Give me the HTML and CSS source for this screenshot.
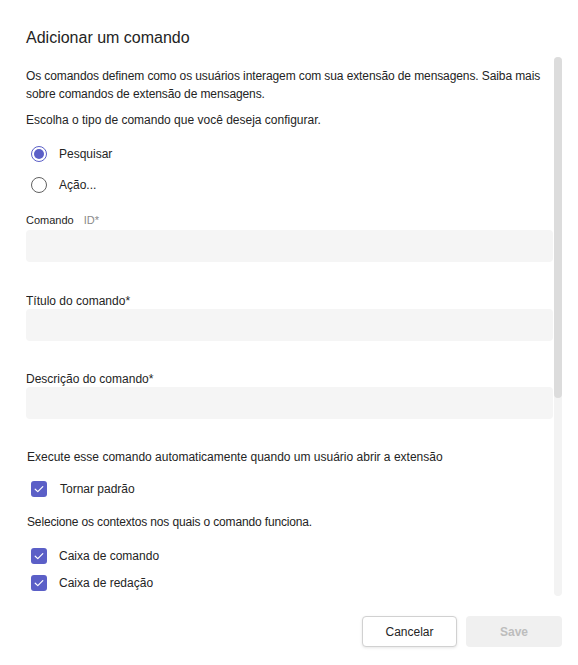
FILE: index.html
```html
<!DOCTYPE html>
<html lang="pt">
<head>
<meta charset="utf-8">
<title>Adicionar um comando</title>
<link rel="stylesheet" href="styles.css">
</head>
<body>
<div class="dialog">
  <h1 class="title">Adicionar um comando</h1>
  <div class="scroll">
    <div class="content">
      <p class="intro">Os comandos definem como os usuários interagem com sua extensão de mensagens. Saiba mais sobre comandos de extensão de mensagens.</p>
      <p class="prompt">Escolha o tipo de comando que você deseja configurar.</p>
      <div class="radios">
        <label class="radio-row">
          <span class="radio checked"><span class="dot"></span></span>
          <span class="radio-label">Pesquisar</span>
        </label>
        <label class="radio-row">
          <span class="radio"></span>
          <span class="radio-label">Ação...</span>
        </label>
      </div>
      <div class="field first">
        <div class="field-label small"><span>Comando</span><span class="muted">ID*</span></div>
        <div class="input"></div>
      </div>
      <div class="field">
        <div class="field-label">Título do comando*</div>
        <div class="input"></div>
      </div>
      <div class="field third">
        <div class="field-label">Descrição do comando*</div>
        <div class="input"></div>
      </div>
      <p class="section">Execute esse comando automaticamente quando um usuário abrir a extensão</p>
      <div class="check-row default">
        <span class="checkbox"><svg viewBox="0 0 16 16" width="16" height="16"><path d="M4.2 8.2 L6.8 10.6 L11.8 5.6" fill="none" stroke="#fff" stroke-width="1.2" stroke-linecap="round" stroke-linejoin="round"/></svg></span>
        <span class="check-label">Tornar padrão</span>
      </div>
      <p class="section second">Selecione os contextos nos quais o comando funciona.</p>
      <div class="check-row context">
        <span class="checkbox"><svg viewBox="0 0 16 16" width="16" height="16"><path d="M4.2 8.2 L6.8 10.6 L11.8 5.6" fill="none" stroke="#fff" stroke-width="1.2" stroke-linecap="round" stroke-linejoin="round"/></svg></span>
        <span class="check-label">Caixa de comando</span>
      </div>
      <div class="check-row context">
        <span class="checkbox"><svg viewBox="0 0 16 16" width="16" height="16"><path d="M4.2 8.2 L6.8 10.6 L11.8 5.6" fill="none" stroke="#fff" stroke-width="1.2" stroke-linecap="round" stroke-linejoin="round"/></svg></span>
        <span class="check-label">Caixa de redação</span>
      </div>
    </div>
    <div class="scrollbar"><div class="thumb"></div></div>
  </div>
  <div class="footer">
    <button class="btn cancel">Cancelar</button>
    <button class="btn save" disabled>Save</button>
  </div>
</div>
</body>
</html>
```
FILE: styles.css
```css
* { box-sizing: border-box; }
html, body { margin: 0; padding: 0; background: #fff; }
body {
  font-family: "Liberation Sans", Arial, sans-serif;
  color: #242424;
  width: 578px;
  height: 665px;
  overflow: hidden;
}
.dialog {
  padding: 26px 16px 0 26px;
  display: flex;
  flex-direction: column;
}
.title {
  margin: 0;
  font-size: 16px;
  font-weight: 400;
  line-height: 24px;
  height: 31px;
}
.scroll {
  display: flex;
  height: 539px;
}
.content {
  flex: 1;
  padding-top: 10px;
  padding-right: 1px;
  overflow: hidden;
}
.scrollbar {
  width: 8px;
  background: #f3f3f3;
  border-radius: 4px;
}
.thumb {
  height: 341px;
  background: #dcdcdc;
  border-radius: 4px;
}
p { margin: 0; }
.intro {
  font-size: 12px;
  line-height: 18px;
  letter-spacing: -0.1px;
}
.prompt {
  font-size: 12px;
  line-height: 18px;
  margin-top: 8px;
}
.radios {
  margin-top: 9px;
  display: flex;
  flex-direction: column;
}
.radio-row {
  display: flex;
  align-items: center;
  height: 31px;
  padding-left: 5px;
  gap: 12px;
}
.radio {
  width: 16px;
  height: 16px;
  border-radius: 50%;
  border: 1px solid #616161;
  display: flex;
  align-items: center;
  justify-content: center;
}
.radio.checked { border-color: #5b5fc7; }
.dot {
  width: 10px;
  height: 10px;
  border-radius: 50%;
  background: #5b5fc7;
}
.radio-label { font-size: 12px; }
.field { margin-top: 31px; }
.field.first { margin-top: 12px; }
.field.third { margin-top: 30px; }
.field-label {
  font-size: 12px;
  line-height: 16px;
}
.field-label.small {
  font-size: 11px;
  line-height: 17px;
  display: flex;
  gap: 10px;
  margin-bottom: 1px;
}
.muted { color: #8a8a8a; }
.input {
  height: 32px;
  background: #f5f5f5;
  border-radius: 4px;
}
.section {
  font-size: 12px;
  line-height: 16px;
  margin-top: 30px;
  padding-left: 1px;
}
.section.second {
  margin-top: 12px;
  letter-spacing: -0.15px;
}
.check-row {
  display: flex;
  align-items: center;
  gap: 12px;
  height: 26px;
  padding-left: 5px;
  font-size: 12px;
}
.check-row.default { margin-top: 11px; gap: 13px; }
.check-row.context { height: 27px; }
.section.second + .check-row { margin-top: 12px; }
.checkbox {
  width: 16px;
  height: 16px;
  border-radius: 3px;
  background: #5b5fc7;
  display: flex;
}
.footer {
  display: flex;
  justify-content: flex-end;
  gap: 9px;
  margin-top: 20px;
}
.btn {
  height: 31px;
  width: 96px;
  border-radius: 4px;
  font-family: inherit;
  font-size: 12px;
  font-weight: 600;
}
.cancel {
  width: 95px;
  background: #fff;
  border: 1px solid #d1d1d1;
  color: #242424;
  font-weight: 400;
  box-shadow: 0 1px 3px rgba(0,0,0,0.1);
}
.save {
  background: #f0f0f0;
  border: none;
  color: #bdbdbd;
}
```
